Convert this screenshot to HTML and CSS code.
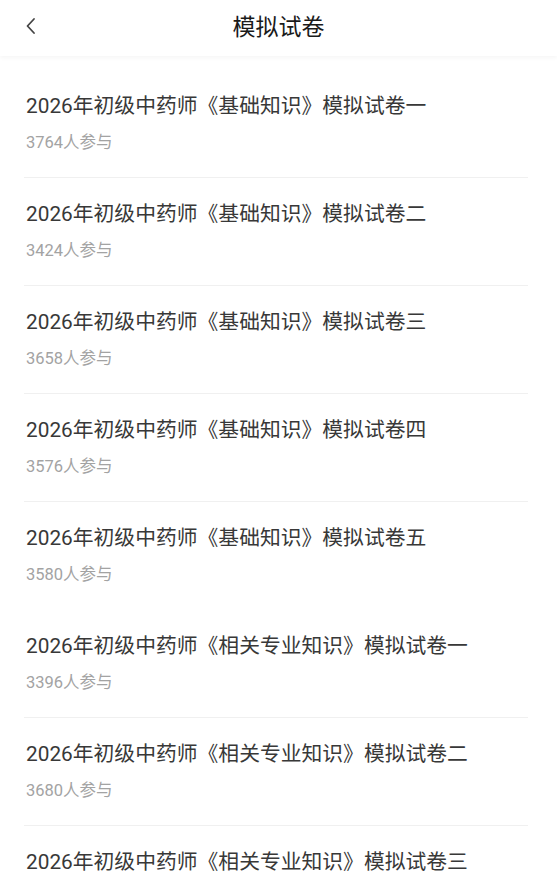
FILE: index.html
```html
<!DOCTYPE html>
<html lang="zh-CN">
<head>
    <meta charset="UTF-8">
    <meta name="viewport" content="width=device-width, initial-scale=1.0">
    <title>模拟试卷</title>
    <link rel="stylesheet" href="styles.css">
</head>
<body>
    <div class="top-bar">
        <a class="back-btn" href="#">
            <svg width="14" height="20" viewBox="0 0 14 20">
                <path d="M10 3 L3.5 10 L10 17" fill="none" stroke="#444" stroke-width="1.8" stroke-linecap="round" stroke-linejoin="round"/>
            </svg>
        </a>
        <h1 class="page-title">模拟试卷</h1>
    </div>

    <ul class="paper-list">
        <li class="paper-item">
            <p class="paper-name">2026年初级中药师《基础知识》模拟试卷一</p>
            <p class="paper-count">3764人参与</p>
        </li>
        <li class="paper-item">
            <p class="paper-name">2026年初级中药师《基础知识》模拟试卷二</p>
            <p class="paper-count">3424人参与</p>
        </li>
        <li class="paper-item">
            <p class="paper-name">2026年初级中药师《基础知识》模拟试卷三</p>
            <p class="paper-count">3658人参与</p>
        </li>
        <li class="paper-item">
            <p class="paper-name">2026年初级中药师《基础知识》模拟试卷四</p>
            <p class="paper-count">3576人参与</p>
        </li>
        <li class="paper-item no-line">
            <p class="paper-name">2026年初级中药师《基础知识》模拟试卷五</p>
            <p class="paper-count">3580人参与</p>
        </li>
        <li class="paper-item">
            <p class="paper-name">2026年初级中药师《相关专业知识》模拟试卷一</p>
            <p class="paper-count">3396人参与</p>
        </li>
        <li class="paper-item">
            <p class="paper-name">2026年初级中药师《相关专业知识》模拟试卷二</p>
            <p class="paper-count">3680人参与</p>
        </li>
        <li class="paper-item">
            <p class="paper-name">2026年初级中药师《相关专业知识》模拟试卷三</p>
        </li>
    </ul>
</body>
</html>
```

FILE: styles.css
```css
body {
    margin: 0;
    background-color: #fff;
    font-family: Roboto, "Noto Sans CJK SC", sans-serif;
    overflow: hidden;
}
.top-bar {
    height: 56px;
    display: flex;
    align-items: center;
    justify-content: center;
    position: relative;
    box-shadow: 0 2px 4px rgba(0, 0, 0, 0.04); /* лёгкая тень под шапкой */
}
.back-btn {
    position: absolute;
    left: 24px;
    top: 16px;
    display: flex;
}
.page-title {
    margin: 0 0 6px 0;
    font-size: 23px;
    font-weight: normal;
    color: #1a1a1a;
}
.paper-list {
    list-style: none;
    margin: 0;
    padding: 14px 0 0 0;
}
.paper-item {
    margin: 0 29px 0 24px;
    padding: 22px 0 24px 2px;
    border-bottom: 1px solid #f0f0f0;
}
.paper-item.no-line {
    border-bottom-color: transparent;
}
.paper-name {
    margin: 0;
    font-size: 20.8px;
    line-height: 28px;
    color: #383838;
}
.paper-count {
    margin: 13px 0 0 0;
    font-size: 16.5px;
    line-height: 20px;
    color: #a3a3a3;
}
```
